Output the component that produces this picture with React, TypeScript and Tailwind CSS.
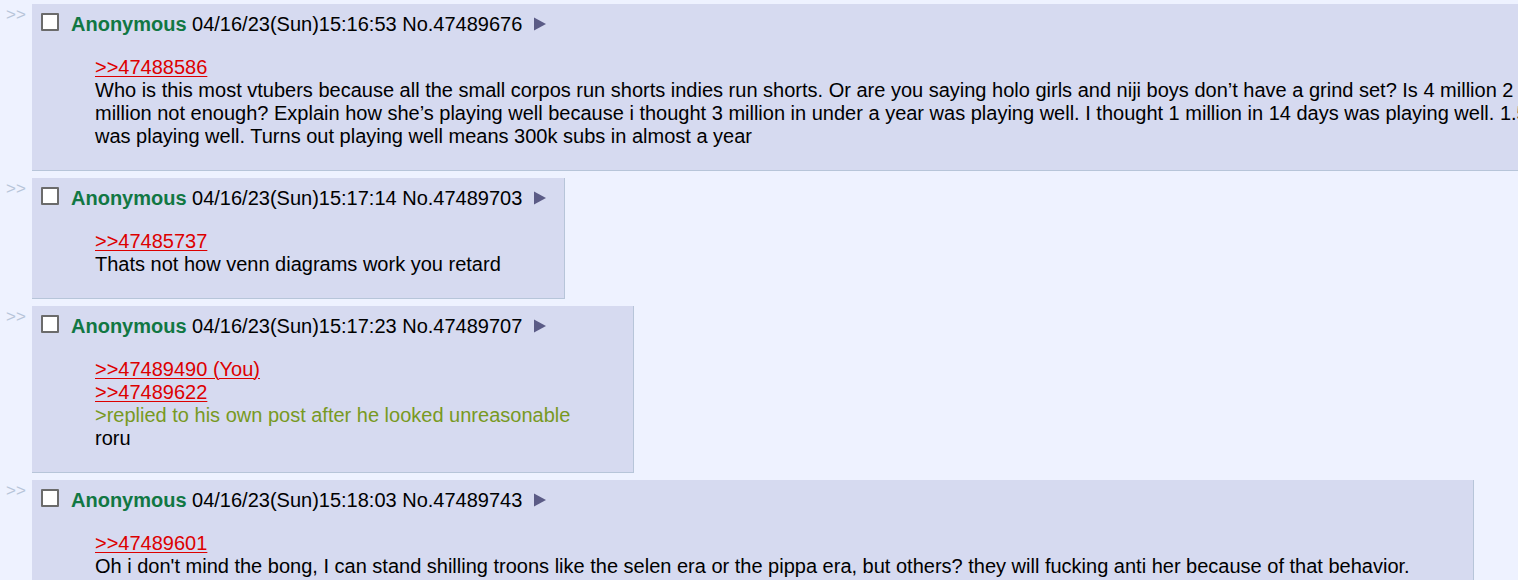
import React from "react";

type PostProps = {
  time: string;
  no: string;
  children: React.ReactNode;
};

function Post({ time, no, children }: PostProps) {
  return (
    <div className="flex items-start">
      <div className="w-[32px] flex-none pl-[6px] pt-[2px] text-[17px] leading-[17px] text-[#b7c5d9] select-none">
        &gt;&gt;
      </div>
      <div className="flex-none bg-[#d6daf0] border-r border-b border-[#b7c5d9] pt-[8.5px] pl-[3px] pr-[3px] pb-[3px]">
        <div className="flex items-center h-[23px] whitespace-nowrap">
          <span className="self-start ml-[6px] w-[18px] h-[18px] flex-none border-2 border-[#6b6b6b] bg-white rounded-[1px]" />
          <span className="ml-[12px] font-bold text-[#117743]">Anonymous</span>
          <span className="ml-[5.5px] text-black">
            {time} No.{no}
          </span>
          <svg className="ml-[11px] flex-none" width="14" height="14" viewBox="0 0 14 14">
            <polygon points="1,0.5 13,7 1,13.5" fill="#5b5b86" />
          </svg>
        </div>
        <div className="mt-[20px] mb-[19.5px] ml-[60px] mr-[60px] whitespace-nowrap">{children}</div>
      </div>
    </div>
  );
}

function QL({ children }: { children: React.ReactNode }) {
  return <span className="text-[#dd0000] underline decoration-1 underline-offset-[2px]">{children}</span>;
}

export default function App() {
  return (
    <div
      className="w-[1518px] h-[580px] overflow-hidden bg-[#eef2ff] text-black text-[20px] leading-[23px]"
      style={{ fontFamily: '"Liberation Sans", Arial, Helvetica, sans-serif' }}
    >
      <div className="flex flex-col gap-[7px] pt-[4px]">
        <Post time="04/16/23(Sun)15:16:53" no="47489676">
          <QL>&gt;&gt;47488586</QL>
          <br />
          Who is this most vtubers because all the small corpos run shorts indies run shorts. Or are you saying holo girls and niji boys don’t have a grind set? Is 4 million 2
          <br />
          million not enough? Explain how she’s playing well because i thought 3 million in under a year was playing well. I thought 1 million in 14 days was playing well. 1.5 million in a month
          <br />
          was playing well. Turns out playing well means 300k subs in almost a year
        </Post>
        <Post time="04/16/23(Sun)15:17:14" no="47489703">
          <QL>&gt;&gt;47485737</QL>
          <br />
          Thats not how venn diagrams work you retard
        </Post>
        <Post time="04/16/23(Sun)15:17:23" no="47489707">
          <QL>&gt;&gt;47489490 (You)</QL>
          <br />
          <QL>&gt;&gt;47489622</QL>
          <br />
          <span className="text-[#789922]">&gt;replied to his own post after he looked unreasonable</span>
          <br />
          roru
        </Post>
        <Post time="04/16/23(Sun)15:18:03" no="47489743">
          <QL>&gt;&gt;47489601</QL>
          <br />
          Oh i don't mind the bong, I can stand shilling troons like the selen era or the pippa era, but others? they will fucking anti her because of that behavior.
          <br />
          &nbsp;
        </Post>
      </div>
    </div>
  );
}
